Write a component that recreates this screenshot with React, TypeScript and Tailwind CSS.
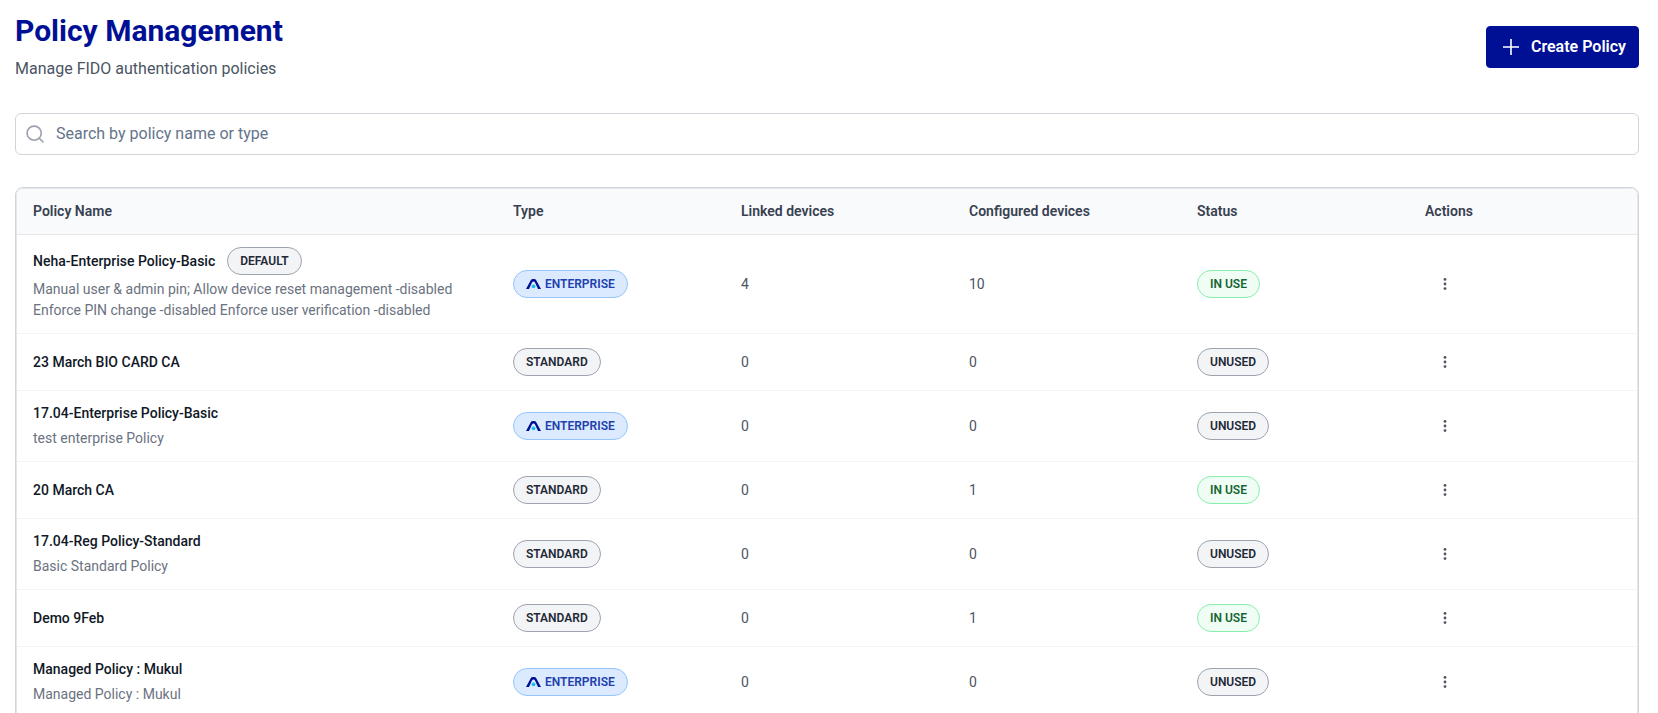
import { ReactNode } from "react";

type Policy = {
  name: string;
  description?: string;
  isDefault?: boolean;
  type: "ENTERPRISE" | "STANDARD";
  linked: number;
  configured: number;
  inUse: boolean;
};

const policies: Policy[] = [
  {
    name: "Neha-Enterprise Policy-Basic",
    description:
      "Manual user & admin pin; Allow device reset management -disabled Enforce PIN change -disabled Enforce user verification -disabled",
    isDefault: true,
    type: "ENTERPRISE",
    linked: 4,
    configured: 10,
    inUse: true,
  },
  { name: "23 March BIO CARD CA", type: "STANDARD", linked: 0, configured: 0, inUse: false },
  {
    name: "17.04-Enterprise Policy-Basic",
    description: "test enterprise Policy",
    type: "ENTERPRISE",
    linked: 0,
    configured: 0,
    inUse: false,
  },
  { name: "20 March CA", type: "STANDARD", linked: 0, configured: 1, inUse: true },
  {
    name: "17.04-Reg Policy-Standard",
    description: "Basic Standard Policy",
    type: "STANDARD",
    linked: 0,
    configured: 0,
    inUse: false,
  },
  { name: "Demo 9Feb", type: "STANDARD", linked: 0, configured: 1, inUse: true },
  {
    name: "Managed Policy : Mukul",
    description: "Managed Policy : Mukul",
    type: "ENTERPRISE",
    linked: 0,
    configured: 0,
    inUse: false,
  },
];

const columns = ["Policy Name", "Type", "Linked devices", "Configured devices", "Status", "Actions"];

const badgeTones = {
  gray: "border-[#9ca3af] bg-[#f3f4f6] text-[#1f2937]",
  blue: "border-[#93c5fd] bg-[#dbeafe] text-[#1e40af]",
  green: "border-[#86efac] bg-[#f0fdf4] text-[#166534]",
};

const Badge = ({ tone, children }: { tone: keyof typeof badgeTones; children: ReactNode }) => (
  <span
    className={`inline-flex h-7 items-center gap-1 rounded-full border px-3 text-xs font-semibold whitespace-nowrap ${badgeTones[tone]}`}
  >
    {children}
  </span>
);

const EnterpriseLogo = () => (
  <svg width="15" height="10" viewBox="0 0 15 10" aria-hidden="true">
    <path
      d="M0 10 4.9 1.1Q5.500 0 6.800 0h1.400q1.300 0 1.900 1.100L15 10h-3L9 3.600Q8.500 2.400 7.500 2.400T6 3.600L3 10Z"
      fill="#001094"
    />
    <circle cx="7.5" cy="7.3" r="1.9" fill="#12c0e8" />
  </svg>
);

const PolicyRow = ({ policy }: { policy: Policy }) => (
  <tr className="border-b border-[#f3f4f6]">
    <td className="px-4 py-3">
      <div className="flex items-center gap-3">
        <span className="font-medium text-[#111827]">{policy.name}</span>
        {policy.isDefault && <Badge tone="gray">DEFAULT</Badge>}
      </div>
      {policy.description && <p className="mt-1 text-[#6b7280]">{policy.description}</p>}
    </td>
    <td className="px-4 py-3">
      <div className="flex">
        {policy.type === "ENTERPRISE" ? (
          <Badge tone="blue">
            <EnterpriseLogo />
            ENTERPRISE
          </Badge>
        ) : (
          <Badge tone="gray">STANDARD</Badge>
        )}
      </div>
    </td>
    <td className="px-4 py-3 text-[#4b5563]">{policy.linked}</td>
    <td className="px-4 py-3 text-[#4b5563]">{policy.configured}</td>
    <td className="px-4 py-3">
      <div className="flex">
        <Badge tone={policy.inUse ? "green" : "gray"}>{policy.inUse ? "IN USE" : "UNUSED"}</Badge>
      </div>
    </td>
    <td className="px-4 py-3">
      <button
        type="button"
        aria-label={`Actions for ${policy.name}`}
        className="flex h-8 w-10 items-center justify-center rounded text-[#4b5563]"
      >
        <svg width="16" height="16" viewBox="0 0 16 16" fill="currentColor" aria-hidden="true">
          <circle cx="8" cy="3.4" r="1.4" />
          <circle cx="8" cy="8" r="1.4" />
          <circle cx="8" cy="12.6" r="1.4" />
        </svg>
      </button>
    </td>
  </tr>
);

export default function App() {
  return (
    <main className="min-h-screen bg-white pt-[13px] pr-[19px] pl-[15px] font-['Roboto',sans-serif]">
      <header className="flex items-center justify-between">
        <div>
          <h1 className="text-3xl font-bold text-[#001094]">Policy Management</h1>
          <p className="mt-2 text-base text-[#4b5563]">Manage FIDO authentication policies</p>
        </div>
        <button
          type="button"
          className="flex h-[42px] items-center gap-2 rounded border border-[#001094] bg-[#001094] px-3 text-base font-semibold text-white"
        >
          <svg width="24" height="24" viewBox="0 0 24 24" fill="none" stroke="currentColor" strokeWidth="1.6" aria-hidden="true">
            <path d="M12 4v16M4 12h16" />
          </svg>
          Create Policy
        </button>
      </header>

      <label className="mt-8 flex h-[42px] items-center gap-[11px] rounded-md border border-[#d1d5db] px-[9px]">
        <svg
          width="20"
          height="20"
          viewBox="0 0 24 24"
          fill="none"
          stroke="#9ca3af"
          strokeWidth="2"
          strokeLinecap="round"
          aria-hidden="true"
        >
          <circle cx="11" cy="11" r="8.5" />
          <path d="m21.5 21.5-4.4-4.4" />
        </svg>
        <input
          type="text"
          aria-label="Search policies"
          placeholder="Search by policy name or type"
          className="min-w-0 flex-1 bg-transparent text-base outline-none placeholder:text-[#64748b]"
        />
      </label>

      <div className="mt-8 rounded-lg border border-[#d1d5db]">
        <div className="overflow-hidden rounded-[7px] border border-[#e5e7eb]">
          <table className="w-full table-fixed border-collapse text-left text-sm leading-[21px]">
            <thead className="bg-[#f9fafb]">
              <tr className="border-b border-[#e5e7eb]">
                {columns.map((column, i) => (
                  <th key={column} className={`px-4 py-3 font-semibold text-[#374151] ${i === 0 ? "w-[480px]" : ""}`}>
                    {column}
                  </th>
                ))}
              </tr>
            </thead>
            <tbody>
              {policies.map((policy) => (
                <PolicyRow key={policy.name} policy={policy} />
              ))}
            </tbody>
          </table>
        </div>
      </div>
    </main>
  );
}
